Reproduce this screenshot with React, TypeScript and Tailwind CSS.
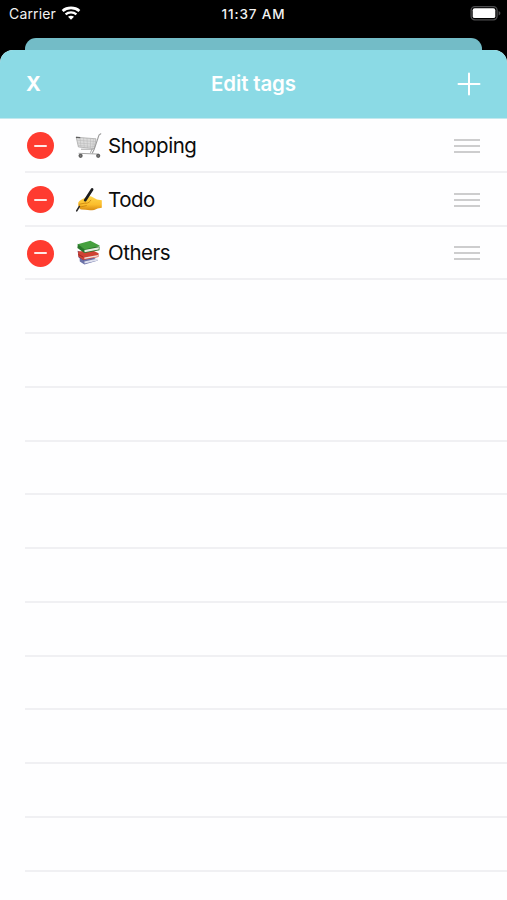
import type { ReactNode } from 'react'

function CartIcon() {
  return (
    <svg width="28" height="28" viewBox="0 0 28 28" fill="none" className="block">
      <path d="M1.2 5.2 21 6.8 19.4 16.6 3.4 15Z" fill="#dcdcdc" stroke="#a2a2a2" strokeWidth="0.7" />
      <path d="M1.8 8.2 20.6 9.6M2.4 11 20.2 12.2M3 13.4 19.8 14.6M5 5.5l1 9.8M8.5 5.8l.8 9.8M12 6.1l.5 9.8M15.5 6.4l0 9.8M18.4 6.6l-.5 9.8" stroke="#b6b6b6" strokeWidth="0.5" />
      <path d="M1 5.4 5.2 5.7" stroke="#5d5d5d" strokeWidth="1.3" />
      <path d="M25.8 1.8 24 3 19.2 17.2 17.2 21.2" stroke="#9b9b9b" strokeWidth="1.1" strokeLinecap="round" />
      <path d="M6 17.2h12.6M17 17 15.4 20.8M3.6 21.3l20.2.8" stroke="#a6a6a6" strokeWidth="1" />
      <circle cx="5.6" cy="23.8" r="2.1" fill="#5f5f5f" />
      <circle cx="23.2" cy="23.8" r="2.1" fill="#5f5f5f" />
      <circle cx="5.6" cy="23.8" r="0.6" fill="#999" />
      <circle cx="23.2" cy="23.8" r="0.6" fill="#999" />
    </svg>
  )
}

function WritingIcon() {
  return (
    <svg width="28" height="28" viewBox="0 0 28 28" fill="none" className="block">
      <defs>
        <linearGradient id="skin" x1="0" y1="0" x2="0" y2="1">
          <stop offset="0" stopColor="#ffd64a" />
          <stop offset="0.6" stopColor="#fbbd2c" />
          <stop offset="1" stopColor="#d98b13" />
        </linearGradient>
      </defs>
      <path d="M3.6 18.2C2.4 16.8 4.2 14.9 6.2 13.7L12 10.8C14 9.8 16.4 10.2 18.2 11.6L22 13.6 26.8 14.2V21.8L22.6 22.4C19.4 24.4 15 24.6 10.4 23.8L6 23.4C4.4 23 4 21.8 4.6 21 3 20.4 2.8 19 3.6 18.2Z" fill="url(#skin)" />
      <path d="M4 18.3 10.6 17M5 21.1 11.4 19.6M11 17.3C13.4 17 15 16 15.8 14.2" stroke="#c9820d" strokeWidth="0.8" strokeLinecap="round" />
      <path d="M17.1 3.4 10.2 14.2" stroke="#1c1c1e" strokeWidth="2.7" strokeLinecap="round" />
      <path d="M4.4 20.4 1.7 24.8" stroke="#29292b" strokeWidth="1.6" strokeLinecap="round" />
    </svg>
  )
}

function BooksIcon() {
  return (
    <svg width="28" height="28" viewBox="0 0 28 28" fill="none" className="block">
      <path d="M4.6 18.8 18.6 18.4 23 21.4 9.4 25.4 4.8 22.6Z" fill="#6b71a8" />
      <path d="M9.4 22.4 22.6 19.6 22.8 21.6 9.6 24.6Z" fill="#dfe1ee" />
      <path d="M2.6 11.8 9.4 14.8 9 21.6 3.6 18.4Z" fill="#5b3e76" />
      <path d="M3 12.4 17.4 11.2 23.6 14.2 23.4 18 8.2 21 3.4 17.4Z" fill="#cf4234" />
      <path d="M9.4 18.5 23 16.1V17.6L9.4 20.1Z" fill="#efdfd8" />
      <path d="M3.4 15.5 8.4 18.2" stroke="#9c2421" strokeWidth="0.9" />
      <path d="M2.8 5.2 2.4 9 9.4 14 24.4 11.2 24.6 7.4Z" fill="#27752a" />
      <path d="M9.4 11 24 8.2 23.7 10.6 9.6 13.2Z" fill="#e8eee3" />
      <path d="M2.6 5.2 15.4 1.8 25 6.8 9.3 10.6Z" fill="#46a03f" />
      <path d="M2.8 5.4 9.2 10.5" stroke="#2d7e2c" strokeWidth="0.9" />
    </svg>
  )
}

function WifiIcon() {
  return (
    <svg width="20" height="14" viewBox="0 0 20 14" fill="none" className="block">
      <path d="M1.6 4.9C6.2.9 13.8.9 18.4 4.9" stroke="white" strokeWidth="2.7" />
      <path d="M4.6 8.3C7.6 5.7 12.4 5.7 15.4 8.3" stroke="white" strokeWidth="2.3" />
      <path d="M10 13.8 7 10.8C8.7 9.4 11.3 9.4 13 10.8Z" fill="white" />
    </svg>
  )
}

function BatteryIcon() {
  return (
    <svg width="32" height="16" viewBox="0 0 32 16" fill="none" className="block">
      <rect x="1.1" y="1.6" width="26" height="13.2" rx="3.7" stroke="#4d4d4f" strokeWidth="1.3" />
      <rect x="2.7" y="3.3" width="22.6" height="9.8" rx="1.9" fill="white" />
      <path d="M28.6 6C31 6.8 31 9.6 28.6 10.4Z" fill="#4d4d4f" />
    </svg>
  )
}

const tags: { name: string; icon: ReactNode }[] = [
  { name: 'Shopping', icon: <CartIcon /> },
  { name: 'Todo', icon: <WritingIcon /> },
  { name: 'Others', icon: <BooksIcon /> },
]

const emptyRows = Array.from({ length: 12 }, (_, i) => i)

function StatusBar() {
  return (
    <div className="grid h-[38px] grid-cols-3 items-start text-[#f2f2f2]">
      <div className="flex pl-[9px] pt-[4px]">
        <span className="text-[14px] leading-5 tracking-[0.15px]">Carrier</span>
        <span className="ml-[5px] mt-[2px]"><WifiIcon /></span>
      </div>
      <span className="pt-[4px] text-center text-[13.5px] font-medium leading-5 tracking-[0.85px]">11:37 AM</span>
      <div className="flex justify-end pr-[5px] pt-[5px]">
        <BatteryIcon />
      </div>
    </div>
  )
}

function TagRow({ name, icon }: { name: string; icon: ReactNode }) {
  return (
    <div className="ml-[25px] flex h-[53.77px] items-center border-b-2 border-[#f0f0f3] pr-[27px] pt-[2px]">
      <button className="ml-[2px] flex h-[27px] w-[27px] items-center justify-center rounded-full bg-[#ff3b30]">
        <span className="h-[2px] w-[13px] rounded-full bg-[#ffe9e7]" />
      </button>
      <span className="ml-[20.5px]">{icon}</span>
      <span className="ml-[5.5px] text-[20.5px] leading-7 tracking-[-0.5px] text-[#0c0c0c]">{name}</span>
      <div className="ml-auto flex w-[26px] flex-col gap-[4px]">
        <span className="h-[2px] bg-[#cdcdce]" />
        <span className="h-[2px] bg-[#cdcdce]" />
        <span className="h-[2px] bg-[#cdcdce]" />
      </div>
    </div>
  )
}

export default function App() {
  return (
    <div className="h-[900px] w-[507px] overflow-hidden bg-black font-['Inter',sans-serif]">
      <StatusBar />
      <div className="mx-[25px] h-[12px] rounded-t-[11px] bg-[#73bcc7]" />

      <div className="h-[850px] rounded-t-[13px] bg-[#fefeff]">
        <header className="grid h-[69px] grid-cols-3 items-center rounded-t-[13px] border-b border-[#c3e9ef] bg-[#8bdae5] text-white">
          <span className="pl-[26px] text-[20px] font-bold leading-7">X</span>
          <h1 className="text-center text-[20.5px] font-semibold leading-7 tracking-[-0.15px]">Edit tags</h1>
          <svg width="24" height="24" viewBox="0 0 24 24" className="mr-[26px] justify-self-end" fill="none">
            <path d="M12 1.5v21M1.5 12h21" stroke="white" strokeWidth="2" strokeLinecap="round" />
          </svg>
        </header>

        {tags.map((tag) => (
          <TagRow key={tag.name} name={tag.name} icon={tag.icon} />
        ))}
        {emptyRows.map((row) => (
          <div key={row} className="ml-[25px] h-[53.77px] border-b-2 border-[#f0f0f3]" />
        ))}
      </div>
    </div>
  )
}
